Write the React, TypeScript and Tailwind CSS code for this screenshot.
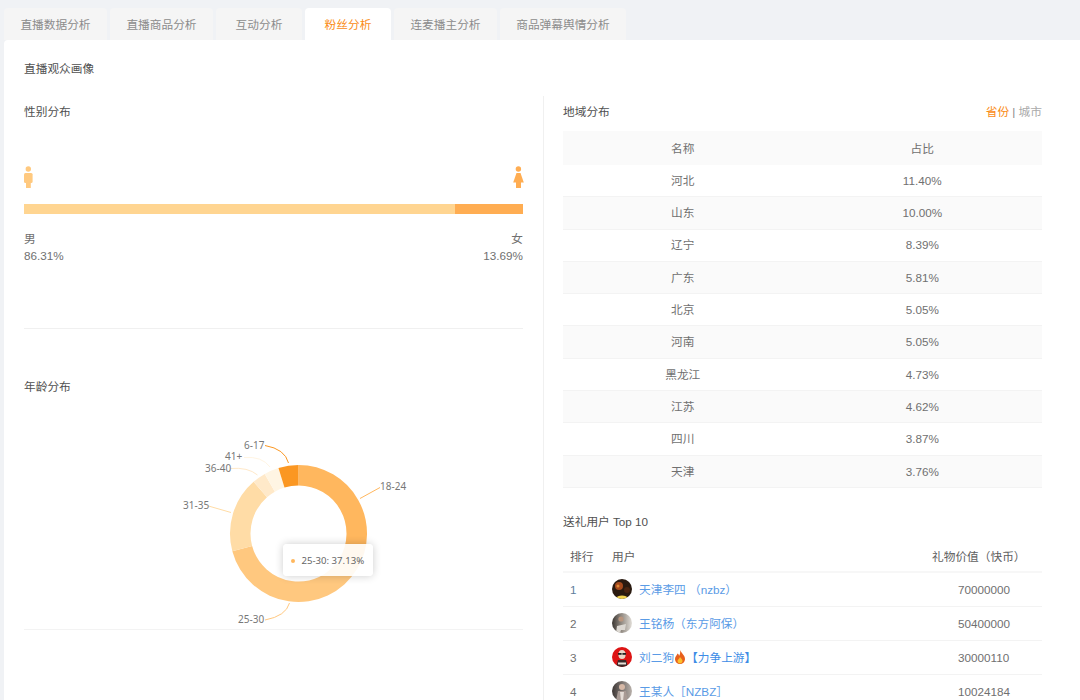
const tabs = ["直播数据分析", "直播商品分析", "互动分析", "粉丝分析", "连麦播主分析", "商品弹幕舆情分析"];
const tabWidths = ["w-[103px]", "w-[103px]", "w-[86px]", "w-[86px]", "w-[103px]", "w-[126px]"];

const regions = [
  ["河北", "11.40%"],
  ["山东", "10.00%"],
  ["辽宁", "8.39%"],
  ["广东", "5.81%"],
  ["北京", "5.05%"],
  ["河南", "5.05%"],
  ["黑龙江", "4.73%"],
  ["江苏", "4.62%"],
  ["四川", "3.87%"],
  ["天津", "3.76%"],
];

// start / end angle in degrees, clockwise from 12 o'clock
const slices = [
  { from: 0, to: 121.3, color: "#ffb75e" },
  { from: 121.3, to: 255, color: "#ffc87f" },
  { from: 255, to: 319, color: "#ffdca6" },
  { from: 319, to: 330.5, color: "#ffe9c9" },
  { from: 330.5, to: 343, color: "#fff5e3" },
  { from: 343, to: 360, color: "#fb9722" },
];

const labels = [
  { text: "18-24", x: 380, y: 490, line: "M360 498.5 L380 487.5", color: "#ffb75e" },
  { text: "25-30", x: 238, y: 623, line: "M265 620 Q286 616 289.5 603", color: "#ffc87f" },
  { text: "31-35", x: 183, y: 509, line: "M208.5 506 L231 512.5", color: "#ffdca6" },
  { text: "36-40", x: 205, y: 472, line: "M230.5 468.5 Q248 467 257.5 475", color: "#ffe9c9" },
  { text: "41+", x: 225, y: 460, line: "M244 457.5 Q262 456 270 467", color: "#fff5e3" },
  { text: "6-17", x: 244, y: 449, line: "M265 445.5 Q285 449 288.5 463", color: "#fb9722" },
];

function arc(from: number, to: number) {
  const cx = 298.5;
  const cy = 533.5;
  const R = 68.5;
  const r = 48;
  const pt = (rad: number, deg: number) => {
    const a = (deg * Math.PI) / 180;
    return `${(cx + rad * Math.sin(a)).toFixed(2)} ${(cy - rad * Math.cos(a)).toFixed(2)}`;
  };
  const large = to - from > 180 ? 1 : 0;
  return `M${pt(R, from)} A${R} ${R} 0 ${large} 1 ${pt(R, to)} L${pt(r, to)} A${r} ${r} 0 ${large} 0 ${pt(r, from)} Z`;
}

function MaleIcon() {
  return (
    <svg width="9" height="22" viewBox="0 0 9 22" fill="#ffc97f">
      <circle cx="4.3" cy="3" r="2.7" />
      <rect x="0" y="7" width="8.6" height="10" rx="1.5" />
      <rect x="2" y="14" width="4.8" height="8" />
    </svg>
  );
}

function FemaleIcon() {
  return (
    <svg width="11" height="22" viewBox="0 0 11 22" fill="#ffad52" className="-mr-px">
      <circle cx="5.4" cy="3" r="2.7" />
      <path d="M3.5 7 H7.5 L10.8 16.5 H0.2 Z" />
      <rect x="3" y="15" width="5" height="7" />
    </svg>
  );
}

function Avatar1() {
  return (
    <svg width="20" height="20" viewBox="0 0 20 20" className="rounded-full shrink-0">
      <rect width="20" height="20" fill="#2a1a10" />
      <circle cx="7" cy="7" r="4" fill="#a5491c" />
      <circle cx="6" cy="7" r="1.5" fill="#e08a35" />
      <circle cx="15" cy="11" r="3" fill="#4a2410" />
      <ellipse cx="10" cy="19" rx="5.5" ry="2.5" fill="#f3d34f" />
    </svg>
  );
}

function Avatar2() {
  return (
    <svg width="20" height="20" viewBox="0 0 20 20" className="rounded-full shrink-0">
      <defs>
        <linearGradient id="av2" x1="0" x2="1" y1="0" y2="0">
          <stop offset="0" stopColor="#3a3632" />
          <stop offset="0.45" stopColor="#8f8880" />
          <stop offset="1" stopColor="#e2ded8" />
        </linearGradient>
      </defs>
      <rect width="20" height="20" fill="url(#av2)" />
      <circle cx="9" cy="6" r="2.6" fill="#b8957e" />
      <path d="M5 13 L14 11 L13 17 H9 L8 20 H4 Z" fill="#dcd8d2" />
    </svg>
  );
}

function Avatar3() {
  return (
    <svg width="20" height="20" viewBox="0 0 20 20" className="rounded-full shrink-0">
      <rect width="20" height="20" fill="#dd1414" />
      <ellipse cx="10" cy="7.5" rx="3.6" ry="4.5" fill="#e9d6c8" />
      <rect x="6" y="6" width="3.6" height="1.8" fill="#222" />
      <rect x="10.4" y="6" width="3.6" height="1.8" fill="#222" />
      <path d="M4 20 L6 13 H14 L16 20 Z" fill="#3a2a2a" />
      <rect x="6" y="15.5" width="8" height="2" fill="#e8e0d8" />
    </svg>
  );
}

function Avatar4() {
  return (
    <svg width="20" height="20" viewBox="0 0 20 20" className="rounded-full shrink-0">
      <defs>
        <linearGradient id="av4" x1="0" x2="1" y1="0" y2="0">
          <stop offset="0" stopColor="#3c3634" />
          <stop offset="1" stopColor="#b9b1ab" />
        </linearGradient>
      </defs>
      <rect width="20" height="20" fill="url(#av4)" />
      <circle cx="10" cy="6" r="3" fill="#d6b8a6" />
      <path d="M4 20 L6 10 H14 L16 20 Z" fill="#a89a94" />
      <path d="M8 11 H12 L11 20 H9 Z" fill="#e4dcd6" />
    </svg>
  );
}

function Flame() {
  return (
    <svg width="12" height="14" viewBox="0 0 12 14" className="shrink-0">
      <path d="M6 0 C7 3 11 5 11 9 C11 12 8.5 14 6 14 C3.5 14 1 12 1 9 C1 6.5 3 5.5 3.5 3.5 C4.5 4 5 5 5 6 C6 4.5 6.5 2.5 6 0 Z" fill="#e8601c" />
      <path d="M6 7 C7 8.5 8.5 9.5 8.5 11 C8.5 12.5 7.3 13.4 6 13.4 C4.7 13.4 3.5 12.5 3.5 11 C3.5 9.5 5.5 9 6 7 Z" fill="#fbc02d" />
    </svg>
  );
}

const gifts = [
  { rank: "1", rankClass: "text-[#5f7d9c]", avatar: <Avatar1 />, name: <span>天津李四 （nzbz）</span>, value: "70000000" },
  { rank: "2", rankClass: "text-[#707070]", avatar: <Avatar2 />, name: <span>王铭杨（东方阿保）</span>, value: "50400000" },
  {
    rank: "3",
    rankClass: "text-[#707070]",
    avatar: <Avatar3 />,
    name: (
      <>
        <span>刘二狗</span>
        <Flame />
        <span className="text-[#3d8ce6]">【力争上游】</span>
      </>
    ),
    value: "30000110",
  },
  { rank: "4", rankClass: "text-[#707070]", avatar: <Avatar4 />, name: <span>王某人［NZBZ］</span>, value: "10024184" },
];

export default function App() {
  return (
    <div className="w-[1080px] h-[700px] overflow-hidden bg-[#f0f2f5] text-[11.7px] text-[#707070] font-['Liberation_Sans','Noto_Sans_CJK_SC',sans-serif]">
      <div className="flex gap-[3px] pl-1 pt-2 h-10">
        {tabs.map((t, i) => (
          <div
            key={t}
            className={`${tabWidths[i]} h-8 pt-px flex items-center justify-center rounded-t ${
              i === 3 ? "bg-white text-[#fa8c16]" : "bg-[#f5f5f5] text-[#8c8c8c]"
            }`}
          >
            {t}
          </div>
        ))}
      </div>

      <div className="ml-1 h-[660px] bg-white rounded-tl px-5">
        <div className="h-14 pt-[2px] flex items-center text-[#505050]">直播观众画像</div>

        <div className="flex">
          <div className="w-[520px] h-[604px] pr-5 border-r border-[#f0f0f0]">
            <div className="h-[30px] pt-[2px] flex items-center text-[#505050]">性别分布</div>
            <div className="mt-10 h-[22px] flex justify-between">
              <MaleIcon />
              <FemaleIcon />
            </div>
            <div className="mt-4 h-2.5 flex">
              <div className="w-[431px] bg-[#ffd591]" />
              <div className="flex-1 bg-[#ffad52]" />
            </div>
            <div className="mt-[17px] flex justify-between leading-[16px]">
              <div>
                <div>男</div>
                <div className="pt-px">86.31%</div>
              </div>
              <div className="text-right">
                <div>女</div>
                <div className="pt-px">13.69%</div>
              </div>
            </div>
            <div className="mt-[64px] h-px bg-[#f0f0f0]" />
            <div className="mt-[50px] leading-[16px] text-[#505050]">年龄分布</div>
            <div className="relative h-[235px] border-b border-[#f3f3f3]">
              <svg width="500" height="235" viewBox="24 395 500 235" className="block">
                {slices.map((s) => (
                  <path key={s.color} d={arc(s.from, s.to)} fill={s.color} />
                ))}
                {labels.map((l) => (
                  <g key={l.text}>
                    <path d={l.line} fill="none" stroke={l.color} strokeWidth="1" />
                    <text x={l.x} y={l.y} fontSize="10" fill="#777" fontFamily="'Noto Sans', sans-serif">
                      {l.text}
                    </text>
                  </g>
                ))}
              </svg>
              <div className="absolute left-[259px] top-[149px] w-[90px] h-8 pt-[2px] flex items-center gap-[6.5px] pl-2 bg-white/90 rounded-sm shadow-[0_0_8px_rgba(0,0,0,0.2)] text-[9.6px] text-[#666] font-['Noto_Sans',sans-serif]">
                <span className="w-1 h-1 rounded-full bg-[#ffb75e]" />
                <span>25-30: 37.13%</span>
              </div>
            </div>
          </div>

          <div className="w-[479px] pl-[19px] box-content">
            <div className="h-[35px] pb-[3px] flex items-center justify-between text-[#505050]">
              <span>地域分布</span>
              <span className="text-[#888]">
                <span className="text-[#fa8c16]">省份</span> | <span className="text-[#aaa]">城市</span>
              </span>
            </div>
            <div className="h-[34px] pt-px grid grid-cols-2 items-center text-center bg-[#fafafa]">
              <div>名称</div>
              <div>占比</div>
            </div>
            {regions.map(([name, pct], i) => (
              <div
                key={name}
                className={`h-[32.3px] grid grid-cols-2 items-center text-center border-b border-[#f3f3f3] ${
                  i % 2 === 1 ? "bg-[#fafafa]" : "bg-white"
                }`}
              >
                <div>{name}</div>
                <div>{pct}</div>
              </div>
            ))}

            <div className="mt-[25px] leading-[17px] text-[#505050]">送礼用户 Top 10</div>
            <div className="mt-[13px] h-[30px] flex items-center border-b-2 border-[#f7f7f7] text-[#606060]">
              <div className="w-[49px] pl-[7px]">排行</div>
              <div className="w-[320px]">用户</div>
              <div>礼物价值（快币）</div>
            </div>
            {gifts.map((g) => (
              <div key={g.rank} className="h-[34px] flex items-center border-b border-[#f3f3f3]">
                <div className={`w-[49px] pl-[7px] ${g.rankClass}`}>{g.rank}</div>
                <div className="w-[346px] flex items-center gap-[7px] text-[#5a9be6]">
                  {g.avatar}
                  <div className="flex items-center">{g.name}</div>
                </div>
                <div>{g.value}</div>
              </div>
            ))}
          </div>
        </div>
      </div>
    </div>
  );
}
